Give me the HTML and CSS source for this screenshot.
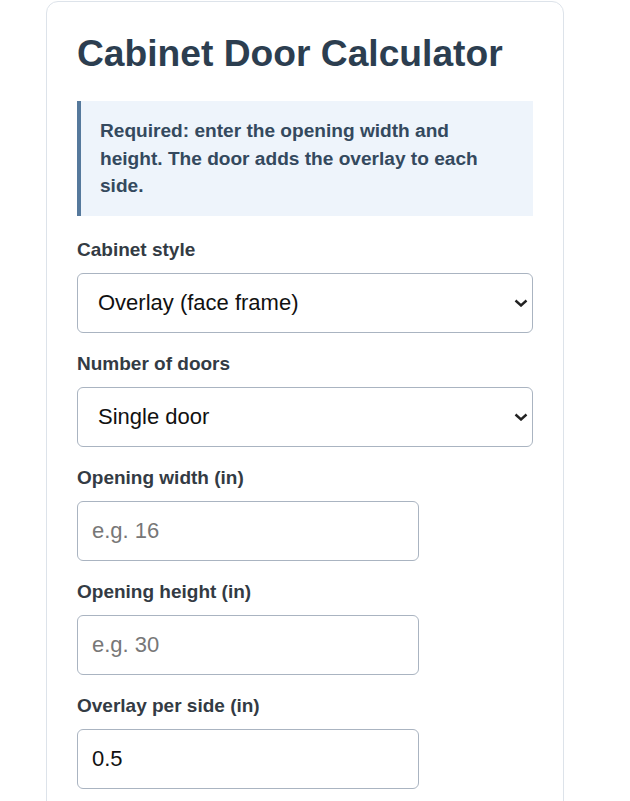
FILE: index.html
```html
<!DOCTYPE html>
<html lang="en">
<head>
    <meta charset="UTF-8">
    <meta name="viewport" content="width=device-width, initial-scale=1.0">
    <title>Cabinet Door Calculator</title>
    <link rel="stylesheet" href="styles.css">
</head>
<body>
    <div class="card">
        <h1>Cabinet Door Calculator</h1>

        <!-- Instructions -->
        <div class="note">
            Required: enter the opening width and height. The door adds the overlay to each side.
        </div>

        <form id="doorForm">
            <div class="field">
                <label for="style">Cabinet style</label>
                <div class="select-wrap">
                    <select id="style">
                        <option value="overlay">Overlay (face frame)</option>
                        <option value="inset">Inset</option>
                        <option value="frameless">Frameless (full overlay)</option>
                    </select>
                    <svg class="chevron" width="14" height="8" viewBox="0 0 14 8"><path d="M1.5 1.5 L7 6.5 L12.5 1.5" fill="none" stroke="#222" stroke-width="2.4"/></svg>
                </div>
            </div>

            <div class="field">
                <label for="doors">Number of doors</label>
                <div class="select-wrap">
                    <select id="doors">
                        <option value="1">Single door</option>
                        <option value="2">Pair of doors</option>
                    </select>
                    <svg class="chevron" width="14" height="8" viewBox="0 0 14 8"><path d="M1.5 1.5 L7 6.5 L12.5 1.5" fill="none" stroke="#222" stroke-width="2.4"/></svg>
                </div>
            </div>

            <div class="field">
                <label for="width">Opening width (in)</label>
                <input type="number" id="width" placeholder="e.g. 16">
            </div>

            <div class="field">
                <label for="height">Opening height (in)</label>
                <input type="number" id="height" placeholder="e.g. 30">
            </div>

            <div class="field">
                <label for="overlay">Overlay per side (in)</label>
                <input type="number" id="overlay" value="0.5" step="0.125">
            </div>
        </form>
    </div>
</body>
</html>
```

FILE: styles.css
```css
body {
    font-family: "Liberation Sans", Arial, sans-serif;
    margin: 0;
    padding: 1px 0 0;
    background-color: #fff;
    color: #2f3a45;
}
.card {
    width: 518px;
    box-sizing: border-box;
    margin-left: 46px;
    padding: 30px 30px;
    border: 1px solid #dde3ea;
    border-radius: 12px;
    background-color: #fff;
}
h1 {
    font-size: 37.2px;
    line-height: 42px;
    margin: 0 0 27px;
    color: #2c3e50;
}
.note {
    background-color: #eef4fb;
    border-left: 4px solid #56799c;
    padding: 16px 20px 16px 19px;
    font-size: 19.1px;
    font-weight: bold;
    line-height: 27.5px;
    color: #34495e;
    margin-bottom: 23px;
}
.field {
    margin-bottom: 20px;
}
.field label {
    display: block;
    font-size: 19px;
    font-weight: bold;
    line-height: 22px;
    margin-bottom: 12px;
    color: #333b44;
}
.field select,
.field input {
    display: block;
    box-sizing: border-box;
    height: 60px;
    font-family: "Liberation Sans", Arial, sans-serif;
    font-size: 22px;
    color: #111;
    background-color: #fff;
    border: 1px solid #aab4c1;
    border-radius: 6px;
}
.select-wrap {
    position: relative;
}
.field select {
    width: 100%;
    padding: 0 30px 0 20px;
    appearance: none;
    -webkit-appearance: none;
}
.chevron {
    position: absolute;
    right: 5px;
    top: 26px;
    pointer-events: none;
}
.field input {
    width: 75%;
    padding: 0 14px;
}
.field input::placeholder {
    color: #777;
}
```
